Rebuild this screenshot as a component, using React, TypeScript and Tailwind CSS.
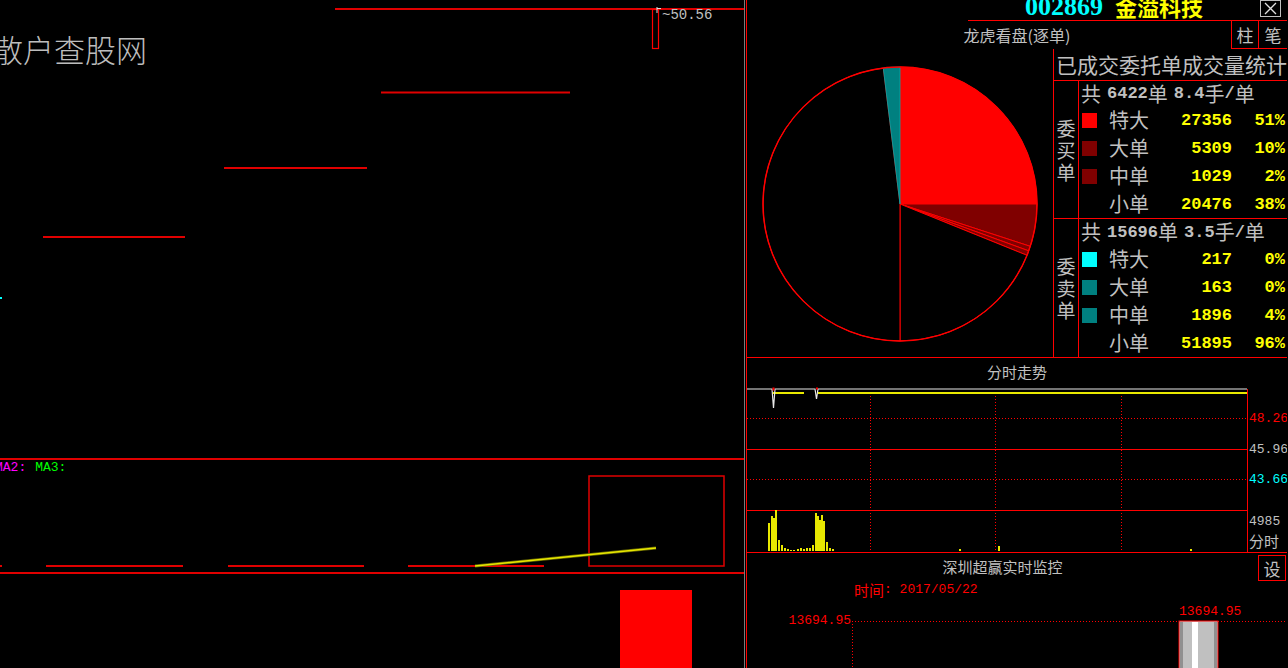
const buy = [
  { name: '特大', vol: '27356', pct: '51%', color: 'bg-[#ff0000]' },
  { name: '大单', vol: '5309', pct: '10%', color: 'bg-[#800000]' },
  { name: '中单', vol: '1029', pct: '2%', color: 'bg-[#800000]' },
  { name: '小单', vol: '20476', pct: '38%', color: '' },
]

const sell = [
  { name: '特大', vol: '217', pct: '0%', color: 'bg-[#00ffff]' },
  { name: '大单', vol: '163', pct: '0%', color: 'bg-[#008080]' },
  { name: '中单', vol: '1896', pct: '4%', color: 'bg-[#008080]' },
  { name: '小单', vol: '51895', pct: '96%', color: '' },
]

// pie wedges, degrees clockwise from 3 o'clock
const CX = 153
const CY = 155
const R = 137
const pt = (a: number) => {
  const t = (a * Math.PI) / 180
  return `${(CX + R * Math.cos(t)).toFixed(2)} ${(CY + R * Math.sin(t)).toFixed(2)}`
}
const wedge = (a0: number, a1: number) =>
  `M${CX} ${CY} L${pt(a0)} A${R} ${R} 0 ${a1 - a0 > 180 ? 1 : 0} 1 ${pt(a1)} Z`

const slices = [
  { a0: -90, a1: 0, fill: '#ff0000' },
  { a0: 0, a1: 18, fill: '#800000' },
  { a0: 18, a1: 20, fill: '#800000' },
  { a0: 20, a1: 22, fill: '#800000' },
  { a0: 22, a1: 90, fill: '#000000' },
  { a0: 90, a1: 263, fill: '#000000' },
]

// x, top of volume bars (chart coords, bottom = 167)
const vols: [number, number][] = [
  [21, 139], [24, 132], [26, 134], [28, 126], [31, 156], [34, 161], [37, 164], [40, 165],
  [43, 166], [46, 166], [50, 165], [53, 164], [56, 165], [59, 164], [62, 164], [65, 161],
  [68, 129], [70, 132], [72, 136], [74, 131], [76, 137], [79, 158], [82, 164], [85, 165],
  [212, 165], [251, 162], [443, 165],
]

function Row({ name, vol, pct, color }: { name: string; vol: string; pct: string; color: string }) {
  return (
    <div className="flex h-[28px] items-center">
      <span className={`ml-[3px] h-[15px] w-[15px] shrink-0 ${color}`} />
      <span className="ml-[12px] text-[20px] leading-none">{name}</span>
      <span className="flex-1 text-right font-['Liberation_Mono',monospace] text-[17px] font-bold leading-none text-[#ffff00]">
        {vol}
      </span>
      <span className="w-[55px] pr-[2px] text-right font-['Liberation_Mono',monospace] text-[17px] font-bold leading-none text-[#ffff00]">
        {pct}
      </span>
    </div>
  )
}

function Block({
  label,
  count,
  avg,
  rows,
  last,
}: {
  label: string
  count: string
  avg: string
  rows: typeof buy
  last?: boolean
}) {
  return (
    <div className={`flex h-[138px] ${last ? '' : 'border-b border-[#ff0000]'}`}>
      <div className="flex w-[25px] flex-col items-center justify-center border-r border-[#ff0000] text-[19px] leading-[22px]">
        {label.split('').map((c) => (
          <span key={c} className="block h-[22px]">
            {c}
          </span>
        ))}
      </div>
      <div className="flex flex-1 flex-col">
        <div className={`flex ${last ? 'h-[26px]' : 'h-[25px]'} items-center whitespace-nowrap pl-[2px] leading-none`}>
          <span className="text-[20px]">共</span>
          <span className="ml-[6px] font-['Liberation_Mono',monospace] text-[17px] font-bold">{count}</span>
          <span className="text-[20px]">单</span>
          <span className="ml-[6px] font-['Liberation_Mono',monospace] text-[17px] font-bold">{avg}</span>
          <span className="text-[20px]">手</span>
          <span className="font-['Liberation_Mono',monospace] text-[17px] font-bold">/</span>
          <span className="text-[20px]">单</span>
        </div>
        {rows.map((r) => (
          <Row key={r.name} {...r} />
        ))}
      </div>
    </div>
  )
}

function LeftPanel() {
  return (
    <div className="flex w-[745px] shrink-0 flex-col border-r border-[#7a7a7a]">
      <div className="relative h-[460px] border-b-2 border-[#e00000]">
        <svg className="absolute inset-0" width="744" height="458">
          <rect x="335" y="8" width="410" height="2" fill="#e00000" />
          <rect x="652.5" y="9.5" width="6" height="39" fill="none" stroke="#ff0000" strokeWidth="1.2" />
          <path d="M657 7 V13 M657 8.5 H661" stroke="#e0e0e0" strokeWidth="1" fill="none" />
          <text x="662" y="19" fill="#c0c0c0" fontFamily="Liberation Mono" fontSize="14">
            ~50.56
          </text>
          <rect x="381" y="91.5" width="189" height="2" fill="#e00000" />
          <rect x="224" y="167" width="143" height="2" fill="#e00000" />
          <rect x="43" y="236" width="142" height="2" fill="#e00000" />
          <rect x="0" y="297" width="2" height="2" fill="#00ffff" />
        </svg>
        <div className="ml-[-8px] pt-[33px] text-[31px] font-light leading-none text-[#bdbdbd]">散户查股网</div>
      </div>
      <div className="relative h-[114px] border-b-2 border-[#e00000]">
        <svg className="absolute inset-0" width="744" height="112">
          <rect x="589" y="16" width="135" height="90" fill="none" stroke="#e00000" strokeWidth="1.5" />
          <rect x="0" y="105" width="2" height="2" fill="#e00000" />
          <rect x="46" y="105" width="137" height="2" fill="#e00000" />
          <rect x="228" y="105" width="136" height="2" fill="#e00000" />
          <rect x="408" y="105" width="136" height="2" fill="#e00000" />
          <line x1="475" y1="106" x2="656" y2="88" stroke="#6b6b00" strokeWidth="3" />
          <line x1="475" y1="106" x2="656" y2="88" stroke="#e8e800" strokeWidth="1.4" />
        </svg>
        <div className="ml-[-5px] flex gap-[9px] pt-[1px] font-['Liberation_Mono',monospace] text-[13px] leading-none">
          <span className="text-[#ff00ff]">MA2:</span>
          <span className="text-[#00ff00]">MA3:</span>
        </div>
      </div>
      <div className="relative flex-1">
        <svg className="absolute inset-0" width="744" height="95">
          <rect x="620" y="16" width="72" height="90" fill="#ff0000" />
        </svg>
      </div>
    </div>
  )
}

function RightPanel() {
  return (
    <div className="flex w-[541px] shrink-0 flex-col border-l border-[#ff0000]">
      <div className="flex h-[21px] justify-end">
        <div className="flex w-[319px] items-end justify-end border-b border-[#ff0000]">
          <span className="font-['Liberation_Serif',serif] text-[26px] font-bold leading-none text-[#00ffff]">002869</span>
          <span className="mb-[3px] ml-[12px] text-[22px] font-bold leading-none text-[#ffff00]">金溢科技</span>
          <span className="mb-[3px] ml-[57px] mr-[6px] flex h-[17px] w-[21px] items-center justify-center self-start border border-[#c0c0c0]">
            <svg width="13" height="13" viewBox="0 0 13 13">
              <path d="M1 1 L12 12 M12 1 L1 12" stroke="#e0e0e0" strokeWidth="1.3" />
            </svg>
          </span>
        </div>
      </div>
      <div className="flex h-[28px]">
        <div className="w-[56px]" />
        <div className="flex flex-1 items-center justify-center text-[16px] leading-none">龙虎看盘(逐单)</div>
        <div className="flex w-[28px] items-center justify-center border-x border-b border-[#ff0000] text-[17px] leading-none">
          柱
        </div>
        <div className="flex w-[28px] items-center justify-center border-b border-[#ff0000] text-[17px] leading-none">
          笔
        </div>
      </div>
      <div className="flex h-[309px] border-b border-[#ff0000]">
        <div className="w-[306px] shrink-0">
          <svg width="306" height="308">
            {slices.map((s) => (
              <path key={s.a0} d={wedge(s.a0, s.a1)} fill={s.fill} stroke="#ff0000" strokeWidth="1" />
            ))}
            <path d={wedge(263, 270)} fill="#008080" stroke="#00a8a8" strokeWidth="0.8" />
            <circle cx={CX} cy={CY} r={R} fill="none" stroke="#ff0000" strokeWidth="1.4" />
          </svg>
        </div>
        <div className="flex min-w-0 flex-1 flex-col border-l border-[#ff0000]">
          <div className="flex h-[32px] items-center overflow-hidden whitespace-nowrap border-b border-[#ff0000] pl-[2px] text-[21px] leading-none">
            已成交委托单成交量统计
          </div>
          <Block label="委买单" count="6422" avg="8.4" rows={buy} />
          <Block label="委卖单" count="15696" avg="3.5" rows={sell} last />
        </div>
      </div>
      <div className="flex h-[195px] flex-col border-b border-[#ff0000]">
        <div className="flex h-[26px] items-center justify-center text-[15px] leading-none">分时走势</div>
        <svg width="540" height="168">
          <g stroke="#ff0000" strokeWidth="1" strokeDasharray="1 2">
            <line x1="123.5" y1="9" x2="123.5" y2="167" />
            <line x1="248.5" y1="9" x2="248.5" y2="167" />
            <line x1="374.5" y1="9" x2="374.5" y2="167" />
            <line x1="0" y1="34.5" x2="500" y2="34.5" />
            <line x1="0" y1="95.5" x2="500" y2="95.5" />
          </g>
          <rect x="0" y="65" width="500" height="1" fill="#ff0000" />
          <rect x="0" y="126" width="500" height="1" fill="#ff0000" />
          <rect x="500" y="5" width="1" height="163" fill="#ff0000" />
          <rect x="26" y="8" width="31" height="2" fill="#e8e800" />
          <rect x="71" y="8" width="429" height="2" fill="#e8e800" />
          <path d="M0 5 H25 L26.5 24 L28 5 H68 L69.5 15 L71 5 H500" stroke="#e8e8e8" strokeWidth="1.2" fill="none" />
          <rect x="25.5" y="3.5" width="2" height="3" fill="#ff0000" />
          <rect x="69" y="3.5" width="2" height="2" fill="#ff0000" />
          {vols.map(([x, t]) => (
            <rect key={x} x={x} y={t} width="2" height={167 - t} fill="#e8e800" />
          ))}
          <g fontFamily="Liberation Mono" fontSize="13" dominantBaseline="middle">
            <text x="502" y="35" fill="#ff0000">48.26</text>
            <text x="502" y="66" fill="#c0c0c0">45.96</text>
            <text x="502" y="96" fill="#00ffff">43.66</text>
            <text x="502" y="138" fill="#c0c0c0">4985</text>
          </g>
          <text x="502" y="159" fill="#c0c0c0" fontFamily="Noto Sans CJK SC" fontSize="15" dominantBaseline="middle">
            分时
          </text>
        </svg>
      </div>
      <div className="flex flex-1 flex-col">
        <div className="flex h-[26px] items-start">
          <div className="flex h-[26px] flex-1 items-center justify-center text-[15px] leading-none">深圳超赢实时监控</div>
          <div className="mr-[1px] mt-[2px] flex h-[26px] w-[28px] items-center justify-center border border-[#ff0000] text-[17px] leading-none">
            设
          </div>
        </div>
        <div className="flex h-[20px] items-center pl-[107px] leading-none text-[#ff0000]">
          <span className="text-[15px]">时间</span>
          <span className="font-['Liberation_Mono',monospace] text-[13px]">: 2017/05/22</span>
        </div>
        <svg width="540" height="69">
          <g stroke="#ff0000" strokeWidth="1" strokeDasharray="1 2">
            <line x1="105" y1="22.5" x2="540" y2="22.5" />
            <line x1="105.5" y1="22" x2="105.5" y2="69" />
          </g>
          <rect x="432" y="22" width="39" height="50" fill="#c0c0c0" stroke="#ff0000" strokeWidth="1" />
          <rect x="433" y="23" width="3" height="48" fill="#909090" />
          <rect x="467" y="23" width="3" height="48" fill="#909090" />
          <rect x="445" y="23" width="6" height="48" fill="#ffffff" />
          <g fontFamily="Liberation Mono" fontSize="13" fill="#ff0000" dominantBaseline="middle">
            <text x="104" y="22" textAnchor="end">13694.95</text>
            <text x="432" y="13">13694.95</text>
          </g>
        </svg>
      </div>
    </div>
  )
}

export default function App() {
  return (
    <div className="flex h-[668px] w-[1288px] overflow-hidden bg-black font-['Noto_Sans_CJK_SC',sans-serif] text-[#c0c0c0]">
      <LeftPanel />
      <div className="w-[1px] shrink-0" />
      <RightPanel />
    </div>
  )
}
